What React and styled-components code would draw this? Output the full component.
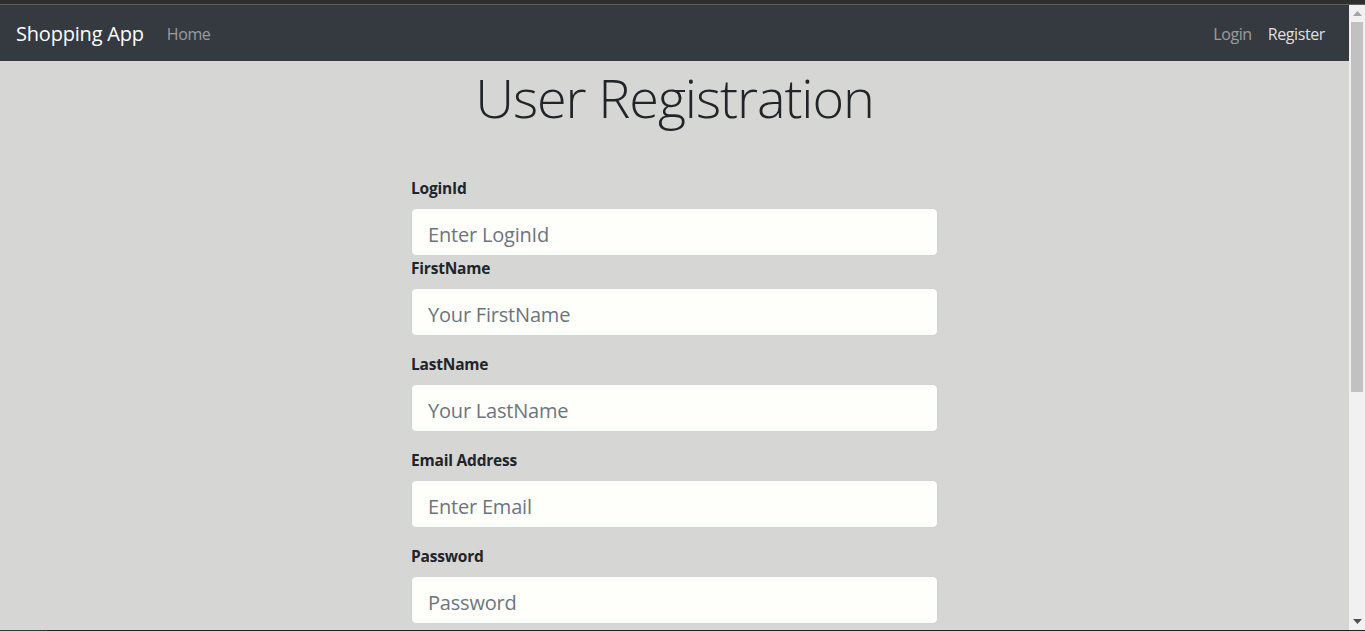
import React, {useState} from 'react';
import styled, {createGlobalStyle} from 'styled-components';

const GlobalStyle = createGlobalStyle`
  html, body {
    margin: 0;
    padding: 0;
    overflow: hidden;
  }
  body {
    font-family: "Open Sans", "Noto Sans", sans-serif;
    color: #212529;
  }
  * {
    box-sizing: border-box;
  }
`

function App() {

    const [state, setState] = useState({
        loginId: "",
        firstName: "",
        lastName: "",
        email: "",
        password: ""
    })

    const handleChange = (e) => {
        const {id, value} = e.target
        setState(prevState => ({
            ...prevState,
            [id]: value
        }))
    }

    const fields = [
        {id: 'loginId', label: 'LoginId', placeholder: 'Enter LoginId', type: 'text', tight: true},
        {id: 'firstName', label: 'FirstName', placeholder: 'Your FirstName', type: 'text'},
        {id: 'lastName', label: 'LastName', placeholder: 'Your LastName', type: 'text'},
        {id: 'email', label: 'Email Address', placeholder: 'Enter Email', type: 'email'},
        {id: 'password', label: 'Password', placeholder: 'Password', type: 'password'},
    ]

  return (
      <Frame>
          <GlobalStyle />
          <TopStrip />
          <Middle>
              <Viewport>
                  <Navbar>
                      <Brand href="#">Shopping App</Brand>
                      <NavLink href="#">Home</NavLink>
                      <Spacer />
                      <NavLink href="#">Login</NavLink>
                      <NavLink href="#" active>Register</NavLink>
                  </Navbar>

                  <Title>User Registration</Title>

                  <Form onSubmit={e => e.preventDefault()}>
                      {fields.map(f => (
                          <Group key={f.id} tight={f.tight}>
                              <Label htmlFor={f.id}>{f.label}</Label>
                              <Input
                                  type={f.type}
                                  id={f.id}
                                  placeholder={f.placeholder}
                                  value={state[f.id]}
                                  onChange={handleChange}
                              />
                          </Group>
                      ))}
                  </Form>
              </Viewport>

              <ScrollBar>
                  <Arrow>
                      <svg width="9" height="5" viewBox="0 0 9 5"><path d="M0 5 L4.5 0 L9 5 Z" fill="#a3a3a3" /></svg>
                  </Arrow>
                  <Track>
                      <Thumb />
                  </Track>
                  <Arrow>
                      <svg width="9" height="5" viewBox="0 0 9 5"><path d="M0 0 L4.5 5 L9 0 Z" fill="#505050" /></svg>
                  </Arrow>
              </ScrollBar>
          </Middle>
          <BottomStrip>
              <BottomLeft />
          </BottomStrip>
      </Frame>
  );
}

export default App;

const Frame = styled.div`
    height: 631px;
    width: 1365px;
    display: flex;
    flex-direction: column;
    background: #d6d6d5;
`

const TopStrip = styled.div`
    height: 5px;
    background: #2e2e2e;
    border-bottom: 1px solid #5f5f5f;
    flex-shrink: 0;
`

const Middle = styled.div`
    flex: 1;
    display: flex;
    min-height: 0;
`

const Viewport = styled.div`
    flex: 1;
    overflow: hidden;
    background: #d6d6d5;
`

const Navbar = styled.nav`
    height: 56px;
    background: #343a40;
    display: flex;
    align-items: center;
    padding: 10px 16px 8px;
`

const Brand = styled.a`
    color: #fff;
    font-size: 20px;
    line-height: 30px;
    margin-right: 15px;
    text-decoration: none;
    letter-spacing: -0.2px;
`

const NavLink = styled.a`
    color: ${p => p.active ? 'rgba(255,255,255,.85)' : 'rgba(255,255,255,.5)'};
    font-size: 16px;
    line-height: 24px;
    padding: 8px;
    text-decoration: none;
    letter-spacing: -0.4px;
`

const Spacer = styled.div`
    flex: 1;
`

const Title = styled.h1`
    margin: 3px 0 0;
    text-align: center;
    font-size: 54px;
    font-weight: 300;
    line-height: 66px;
    letter-spacing: -1.1px;
    color: #212529;
`

const Form = styled.form`
    width: 527px;
    margin: 46px auto 0;
`

const Group = styled.div`
    margin-bottom: ${p => p.tight ? '0' : '16px'};
`

const Label = styled.label`
    display: block;
    font-size: 15.5px;
    font-weight: 700;
    line-height: 24px;
    margin-bottom: 8px;
    letter-spacing: -0.2px;
`

const Input = styled.input`
    display: block;
    width: 100%;
    height: 48px;
    padding: 10px 16px 6px;
    font-family: inherit;
    font-size: 20px;
    line-height: 30px;
    color: #495057;
    background: #fefffb;
    border: 1px solid #ced4da;
    border-radius: 5px;
    outline: none;
    letter-spacing: -0.2px;
    &::placeholder {
        color: #6c757d;
    }
`

const ScrollBar = styled.div`
    width: 16px;
    background: #f1f1f1;
    display: flex;
    flex-direction: column;
`

const Arrow = styled.div`
    height: 17px;
    display: flex;
    align-items: center;
    justify-content: center;
`

const Track = styled.div`
    flex: 1;
    padding: 0 2px;
`

const Thumb = styled.div`
    height: 370px;
    background: #c1c1c1;
`

const BottomStrip = styled.div`
    height: 1px;
    background: #2a1e26;
    flex-shrink: 0;
    display: flex;
`

const BottomLeft = styled.div`
    width: 47px;
    background: #2a3c3e;
`
